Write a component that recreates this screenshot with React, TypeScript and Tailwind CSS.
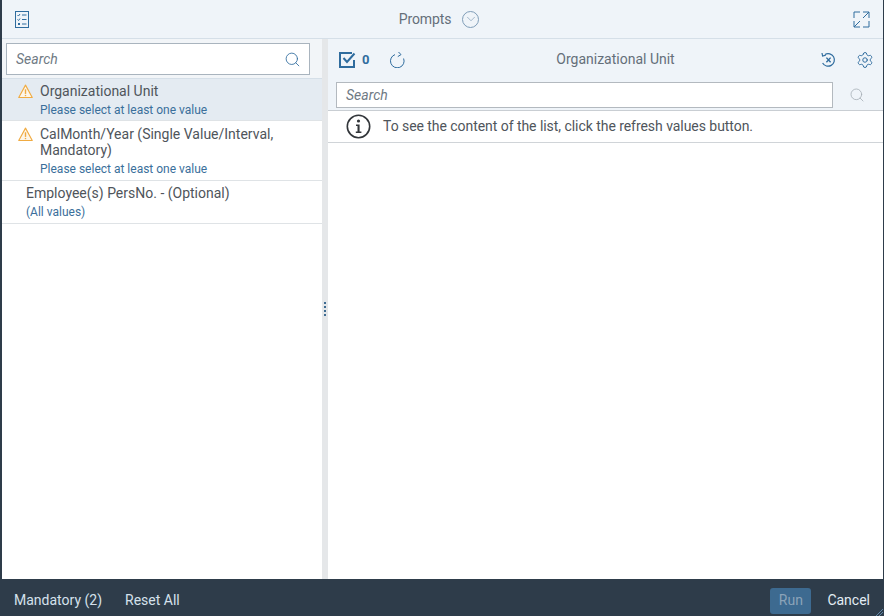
import React from 'react';
import { ChevronDown, Search, Settings } from 'lucide-react';

const WarnIcon = () => (
    <svg width="15" height="15" viewBox="0 0 16 16" fill="none" stroke="#f0ab42" strokeWidth="1.2" className="shrink-0">
        <path d="M8 1.2 L15.2 14.4 H0.8 Z" strokeLinejoin="round" fill="#fdf6ea" />
        <path d="M8 5.6 V10.6" strokeWidth="1.5" />
        <path d="M8 11.6 V13" strokeWidth="1.5" />
    </svg>
);

const PromptItem = ({ title, sub, warn, selected, pad }: { title: React.ReactNode; sub: string; warn?: boolean; selected?: boolean; pad: string }) => (
    <div className={`flex border-b border-[#dfe3e6] ${selected ? 'bg-[#e4ebf2]' : 'bg-white'} ${warn ? 'pl-[16px]' : 'pl-[24px]'} ${pad}`}>
        {warn && (
            <div className="w-[22px] pt-[2px]">
                <WarnIcon />
            </div>
        )}
        <div>
            <div className="text-[14px] leading-[16px] text-[#4f555b] pt-[1px]">{title}</div>
            <div className="text-[12px] leading-[14px] text-[#3a6f9b] mt-[4px]">{sub}</div>
        </div>
    </div>
);

export default function App() {
    return (
        <div className="relative w-[884px] h-[616px] flex flex-col bg-white border-l-2 border-r border-[#2e3c4a] font-['Roboto','Liberation_Sans',sans-serif] overflow-hidden">
            <div className="h-[39px] shrink-0 flex items-center justify-between bg-[#eff4f9] border-b border-[#d5dfe8] pl-[13px] pr-[13px]">
                <svg width="14" height="17" viewBox="0 0 14 17" fill="none" stroke="#2f6c9e" strokeWidth="1">
                    <rect x="0.5" y="0.5" width="13" height="16" />
                    <path d="M2.5 4 L3.5 5 L5 3 M7 4 H11.5 M2.5 8.5 L3.5 9.5 L5 7.5 M7 8.5 H11.5 M3 12 L5 14 M5 12 L3 14 M7 13 H11.5" />
                </svg>
                <div className="flex items-center gap-[11px] mr-[4px] text-[14px] tracking-[-0.1px] text-[#656f79]">
                    <span>Prompts</span>
                    <span className="w-[17px] h-[17px] rounded-full border border-[#7f9db8] flex items-center justify-center text-[#6d8ca8]">
                        <ChevronDown size={14} strokeWidth={1} />
                    </span>
                </div>
                <svg width="17" height="17" viewBox="0 0 17 17" fill="none" stroke="#2f6c9e" strokeWidth="1">
                    <path d="M7 1 H1 V7 M10 16 H16 V10 M10 1 H16 V7 M16 1 L10 7 M1 10 V16 H7 M1 16 L7 10" />
                </svg>
            </div>
            <div className="flex-1 flex min-h-0">
                <div className="w-[320px] shrink-0 flex flex-col">
                    <div className="h-[40px] shrink-0 bg-[#f2f5f8] border-b border-[#d5dfe8] pl-[4px] pr-[12px] pt-[4px]">
                        <div className="h-[32px] bg-white border border-[#a9b4be] flex items-center justify-between pl-[9px] pr-[8px]">
                            <span className="text-[14px] italic text-[#6f7a84]">Search</span>
                            <Search size={17} strokeWidth={1.2} className="text-[#2f6c9e]" />
                        </div>
                    </div>
                    <PromptItem warn selected pad="py-[3px]" title="Organizational Unit" sub="Please select at least one value" />
                    <PromptItem warn pad="py-[4px]" title={<>CalMonth/Year (Single Value/Interval,<br />Mandatory)</>} sub="Please select at least one value" />
                    <PromptItem pad="pt-[3px] pb-[4px]" title="Employee(s) PersNo. - (Optional)" sub="(All values)" />
                </div>
                <div className="w-[6px] shrink-0 bg-[#e5e7e9] flex flex-col items-center justify-center gap-[2px]">
                    <span className="w-[2px] h-[2px] bg-[#3f6c92]" />
                    <span className="w-[2px] h-[2px] bg-[#3f6c92]" />
                    <span className="w-[2px] h-[2px] bg-[#3f6c92]" />
                    <span className="w-[2px] h-[2px] bg-[#3f6c92]" />
                </div>
                <div className="flex-1 flex flex-col min-w-0">
                    <div className="h-[72px] shrink-0 bg-[#eff4f9] border-b border-[#c9ced3]">
                        <div className="h-[43px] pb-[2px] flex items-center pl-[11px] pr-[9px]">
                            <svg width="17" height="16" viewBox="0 0 17 16" fill="none" stroke="#2f6c9e" strokeWidth="2">
                                <path d="M13 1 H1 V15 H15 V8" />
                                <path d="M4.5 6 L8 10 L15.5 1.5" />
                            </svg>
                            <span className="ml-[6px] w-[21px] text-[13px] font-bold text-[#2f6c9e]">0</span>
                            <svg className="ml-[6px]" width="16" height="17" viewBox="0 0 16 17" fill="none" stroke="#2f6c9e" strokeWidth="1">
                                <path d="M6 3.6 A6.8 6.8 0 1 0 14.6 7.5" />
                                <path d="M9.5 1 L12 3.6 L8.8 5.6" />
                            </svg>
                            <span className="flex-1 text-center text-[14px] text-[#656f79] pl-[5px]">Organizational Unit</span>
                            <svg className="mr-[20px]" width="15" height="16" viewBox="0 0 15 16" fill="none" stroke="#2f6c9e" strokeWidth="1.2">
                                <path d="M4 2.4 A6.3 6.3 0 1 1 1.6 11" />
                                <path d="M1 1 L1.6 4 L4.8 3.2" />
                                <path d="M5.4 5.6 L9.6 10.2 M9.6 5.6 L5.4 10.2" strokeWidth="1.4" />
                            </svg>
                            <Settings size={18} strokeWidth={1.3} className="text-[#2f6c9e]" />
                        </div>
                        <div className="flex items-center pl-[8px] pr-[18px]">
                            <div className="flex-1 h-[26px] bg-white border border-[#b3b9bf] flex items-center pl-[9px]">
                                <span className="text-[14px] italic text-[#6f7a84]">Search</span>
                            </div>
                            <Search size={16} strokeWidth={1.2} className="ml-[16px] text-[#a5adb5]" />
                        </div>
                    </div>
                    <div className="h-[32px] shrink-0 flex items-center border-b border-[#d0d4d8] pl-[18px]">
                        <svg width="25" height="25" viewBox="0 0 25 25" fill="none">
                            <circle cx="12.5" cy="12.5" r="11.2" stroke="#32363a" strokeWidth="1.6" />
                            <circle cx="12.5" cy="7" r="1.6" fill="#32363a" />
                            <path d="M10 10.6 H13.6 V17.6 H15.4 V19 H9.8 V17.6 H11.5 V12 H10 Z" fill="#32363a" />
                        </svg>
                        <span className="ml-[12px] text-[14px] tracking-[-0.05px] text-[#4f555b]">To see the content of the list, click the refresh values button.</span>
                    </div>
                </div>
            </div>
            <div className="h-[37px] shrink-0 flex items-center bg-[#2e3c4a] pt-[6px] pl-[12px] pr-[13px] text-[14px] text-[#d5e1ec]">
                <span>Mandatory (2)</span>
                <span className="ml-[23px]">Reset All</span>
                <span className="ml-auto h-[26px] w-[41px] rounded-[3px] bg-[#3d6a90] flex items-center justify-center text-[#8ba3b8]">Run</span>
                <span className="ml-[16px] text-[#e3ecf4]">Cancel</span>
            </div>
            <svg className="absolute right-0 bottom-0" width="7" height="7" viewBox="0 0 7 7" fill="none" stroke="#5f87a8" strokeWidth="1">
                <path d="M0 7 L7 0 M3 7 L7 3" />
            </svg>
        </div>
    );
}
